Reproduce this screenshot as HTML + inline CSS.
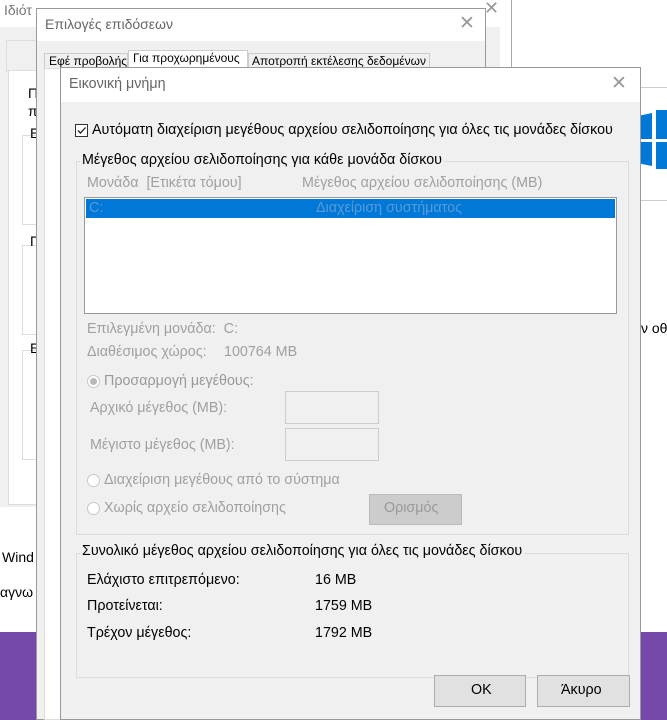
<!DOCTYPE html>
<html><head><meta charset="utf-8"><style>
*{margin:0;padding:0;box-sizing:border-box}
body{width:667px;height:720px;overflow:hidden;position:relative;background:#fff;font-family:"Liberation Sans","DejaVu Sans",sans-serif;font-size:14.3px;color:#000}
.a{position:absolute}
.t{position:absolute;white-space:nowrap}
.dis{color:#a0a0a0}
.w3 .t{font-size:14.3px}
</style></head><body>
<!-- right background -->
<div class="a" style="left:512px;top:87px;width:155px;height:1px;background:#ccc"></div>
<div class="a" style="left:512px;top:200px;width:155px;height:1px;background:#ccc"></div>
<div class="a" style="left:640px;top:113px;width:12px;height:26px;background:#0078d7;clip-path:polygon(0 10%,100% 0,100% 100%,0 100%)"></div>
<div class="a" style="left:656px;top:110px;width:11px;height:29px;background:#0078d7"></div>
<div class="a" style="left:640px;top:142px;width:12px;height:24px;background:#0078d7;clip-path:polygon(0 0,100% 0,100% 100%,0 90%)"></div>
<div class="a" style="left:656px;top:142px;width:11px;height:27px;background:#0078d7"></div>
<div class="t" style="left:641px;top:320px;font-size:14px">ν οθ</div>
<div class="a" style="left:0;top:632px;width:667px;height:88px;background:#7449aa"></div>

<!-- window 1 -->
<div class="a" style="left:0;top:0;width:512px;height:530px;background:#fff;border-right:1px solid #aaa"></div>
<div class="t" style="left:4px;top:2px;color:#777;font-size:14px">Ιδιότ</div>
<div class="t" style="left:484px;top:-2px;color:#999;font-size:18px">✕</div>
<div class="a" style="left:0;top:27px;width:500px;height:480px;background:#f0f0f0"></div>
<div class="a" style="left:6px;top:40px;width:386px;height:32px;border:1px solid #ddd"></div>
<div class="a" style="left:8px;top:70px;width:380px;height:435px;background:#fff;border:1px solid #ddd"></div>
<div class="t" style="left:28px;top:85px;font-size:14px">Π</div>
<div class="t" style="left:28px;top:103px;font-size:14px">π</div>
<div class="a" style="left:22px;top:135px;width:30px;height:90px;border:1px solid #ddd"></div>
<div class="t" style="left:30px;top:125px;font-size:14px">Ε</div>
<div class="a" style="left:22px;top:245px;width:30px;height:90px;border:1px solid #ddd"></div>
<div class="t" style="left:30px;top:233px;font-size:14px">Γ</div>
<div class="a" style="left:22px;top:350px;width:30px;height:110px;border:1px solid #ddd"></div>
<div class="t" style="left:30px;top:340px;font-size:14px">Ε</div>
<div class="t" style="left:2px;top:549px;font-size:14px">Wind</div>
<div class="t" style="left:0;top:584px;font-size:14px">αγνω</div>

<!-- window 2 -->
<div class="a" style="left:36px;top:8px;width:450px;height:712px;background:#f0f0f0;border:1px solid #999"></div>
<div class="a" style="left:37px;top:9px;width:448px;height:32px;background:#fff"></div>
<div class="t" style="left:45px;top:16px;color:#666;font-size:14px">Επιλογές επιδόσεων</div>
<div class="t" style="left:459px;top:12px;color:#999;font-size:19px">✕</div>
<div class="a" style="left:44px;top:68px;width:434px;height:652px;background:#fff;border:1px solid #ddd"></div>
<div class="a" style="left:44px;top:53px;width:84px;height:16px;border:1px solid #ccc;border-bottom:none"></div>
<div class="t" style="left:49px;top:54px;font-size:12px">Εφέ προβολής</div>
<div class="a" style="left:128px;top:50px;width:120px;height:19px;background:#fff;border:1px solid #ccc;border-bottom:none"></div>
<div class="t" style="left:133px;top:51px;font-size:12px">Για προχωρημένους</div>
<div class="a" style="left:248px;top:53px;width:182px;height:16px;border:1px solid #ccc;border-bottom:none"></div>
<div class="t" style="left:252px;top:54px;font-size:12px">Αποτροπή εκτέλεσης δεδομένων</div>

<!-- window 3 -->
<div class="w3">
<div class="a" style="left:60px;top:67px;width:581px;height:653px;background:#f0f0f0;border:1px solid #999"></div>
<div class="a" style="left:61px;top:68px;width:579px;height:34px;background:#fff"></div>
<div class="t" style="left:69px;top:76px;color:#666">Εικονική μνήμη</div>
<div class="t" style="left:611px;top:72px;color:#999;font-size:19px">✕</div>

<div class="a" style="left:75px;top:124px;width:13px;height:13px;border:1px solid #333;background:#fff"></div>
<svg class="a" style="left:76px;top:125px" width="11" height="11"><path d="M2 5.5 L4.5 8 L9.5 2.5" stroke="#222" stroke-width="1.3" fill="none"/></svg>
<div class="t" style="left:92px;top:122px">Αυτόματη διαχείριση μεγέθους αρχείου σελιδοποίησης για όλες τις μονάδες δίσκου</div>

<div class="a" style="left:76px;top:161px;width:553px;height:374px;border:1px solid #ddd"></div>
<div class="t" style="left:80px;top:152px;background:#f0f0f0;padding:0 2px">Μέγεθος αρχείου σελιδοποίησης για κάθε μονάδα δίσκου</div>
<div class="t dis" style="left:87px;top:175px">Μονάδα&nbsp; [Ετικέτα τόμου]</div>
<div class="t dis" style="left:302px;top:175px">Μέγεθος αρχείου σελιδοποίησης (MB)</div>
<div class="a" style="left:84px;top:197px;width:533px;height:117px;background:#fff;border:1px solid #999"></div>
<div class="a" style="left:86px;top:199px;width:529px;height:19px;background:#0078d7"></div>
<div class="t" style="left:89px;top:200px;color:#5a9ad6">C:</div>
<div class="t" style="left:316px;top:200px;color:#5a9ad6">Διαχείριση συστήματος</div>

<div class="t dis" style="left:87px;top:321px">Επιλεγμένη μονάδα:&nbsp; C:</div>
<div class="t dis" style="left:87px;top:344px">Διαθέσιμος χώρος:</div>
<div class="t dis" style="left:224px;top:344px">100764 MB</div>

<div class="a" style="left:87px;top:375px;width:13px;height:13px;border-radius:50%;border:1px solid #c8c8c8;background:#fff"></div>
<div class="a" style="left:90px;top:378px;width:7px;height:7px;border-radius:50%;background:#b8b8b8"></div>
<div class="t dis" style="left:104px;top:373px;color:#999">Προσαρμογή μεγέθους:</div>
<div class="t dis" style="left:90px;top:400px">Αρχικό μέγεθος (MB):</div>
<div class="a" style="left:285px;top:391px;width:94px;height:33px;border:1px solid #ccc;background:#f0f0f0"></div>
<div class="t dis" style="left:90px;top:437px">Μέγιστο μέγεθος (MB):</div>
<div class="a" style="left:285px;top:428px;width:94px;height:33px;border:1px solid #ccc;background:#f0f0f0"></div>

<div class="a" style="left:87px;top:474px;width:13px;height:13px;border-radius:50%;border:1px solid #c8c8c8;background:#fff"></div>
<div class="t dis" style="left:104px;top:472px">Διαχείριση μεγέθους από το σύστημα</div>
<div class="a" style="left:87px;top:502px;width:13px;height:13px;border-radius:50%;border:1px solid #c8c8c8;background:#fff"></div>
<div class="t dis" style="left:104px;top:500px">Χωρίς αρχείο σελιδοποίησης</div>
<div class="a" style="left:369px;top:494px;width:93px;height:31px;background:#ccc;border:1px solid #bbb"></div>
<div class="t dis" style="left:384px;top:500px;color:#999">Ορισμός</div>

<div class="a" style="left:76px;top:553px;width:553px;height:125px;border:1px solid #ddd"></div>
<div class="t" style="left:80px;top:543px;background:#f0f0f0;padding:0 2px">Συνολικό μέγεθος αρχείου σελιδοποίησης για όλες τις μονάδες δίσκου</div>
<div class="t" style="left:87px;top:572px">Ελάχιστο επιτρεπόμενο:</div>
<div class="t" style="left:315px;top:572px">16 MB</div>
<div class="t" style="left:87px;top:598px">Προτείνεται:</div>
<div class="t" style="left:315px;top:598px">1759 MB</div>
<div class="t" style="left:87px;top:625px">Τρέχον μέγεθος:</div>
<div class="t" style="left:315px;top:625px">1792 MB</div>

<div class="a" style="left:434px;top:675px;width:92px;height:32px;background:#e1e1e1;border:1px solid #adadad"></div>
<div class="t" style="left:471px;top:682px">OK</div>
<div class="a" style="left:537px;top:675px;width:93px;height:32px;background:#e1e1e1;border:1px solid #adadad"></div>
<div class="t" style="left:561px;top:682px">Άκυρο</div>
</div>
</body></html>
